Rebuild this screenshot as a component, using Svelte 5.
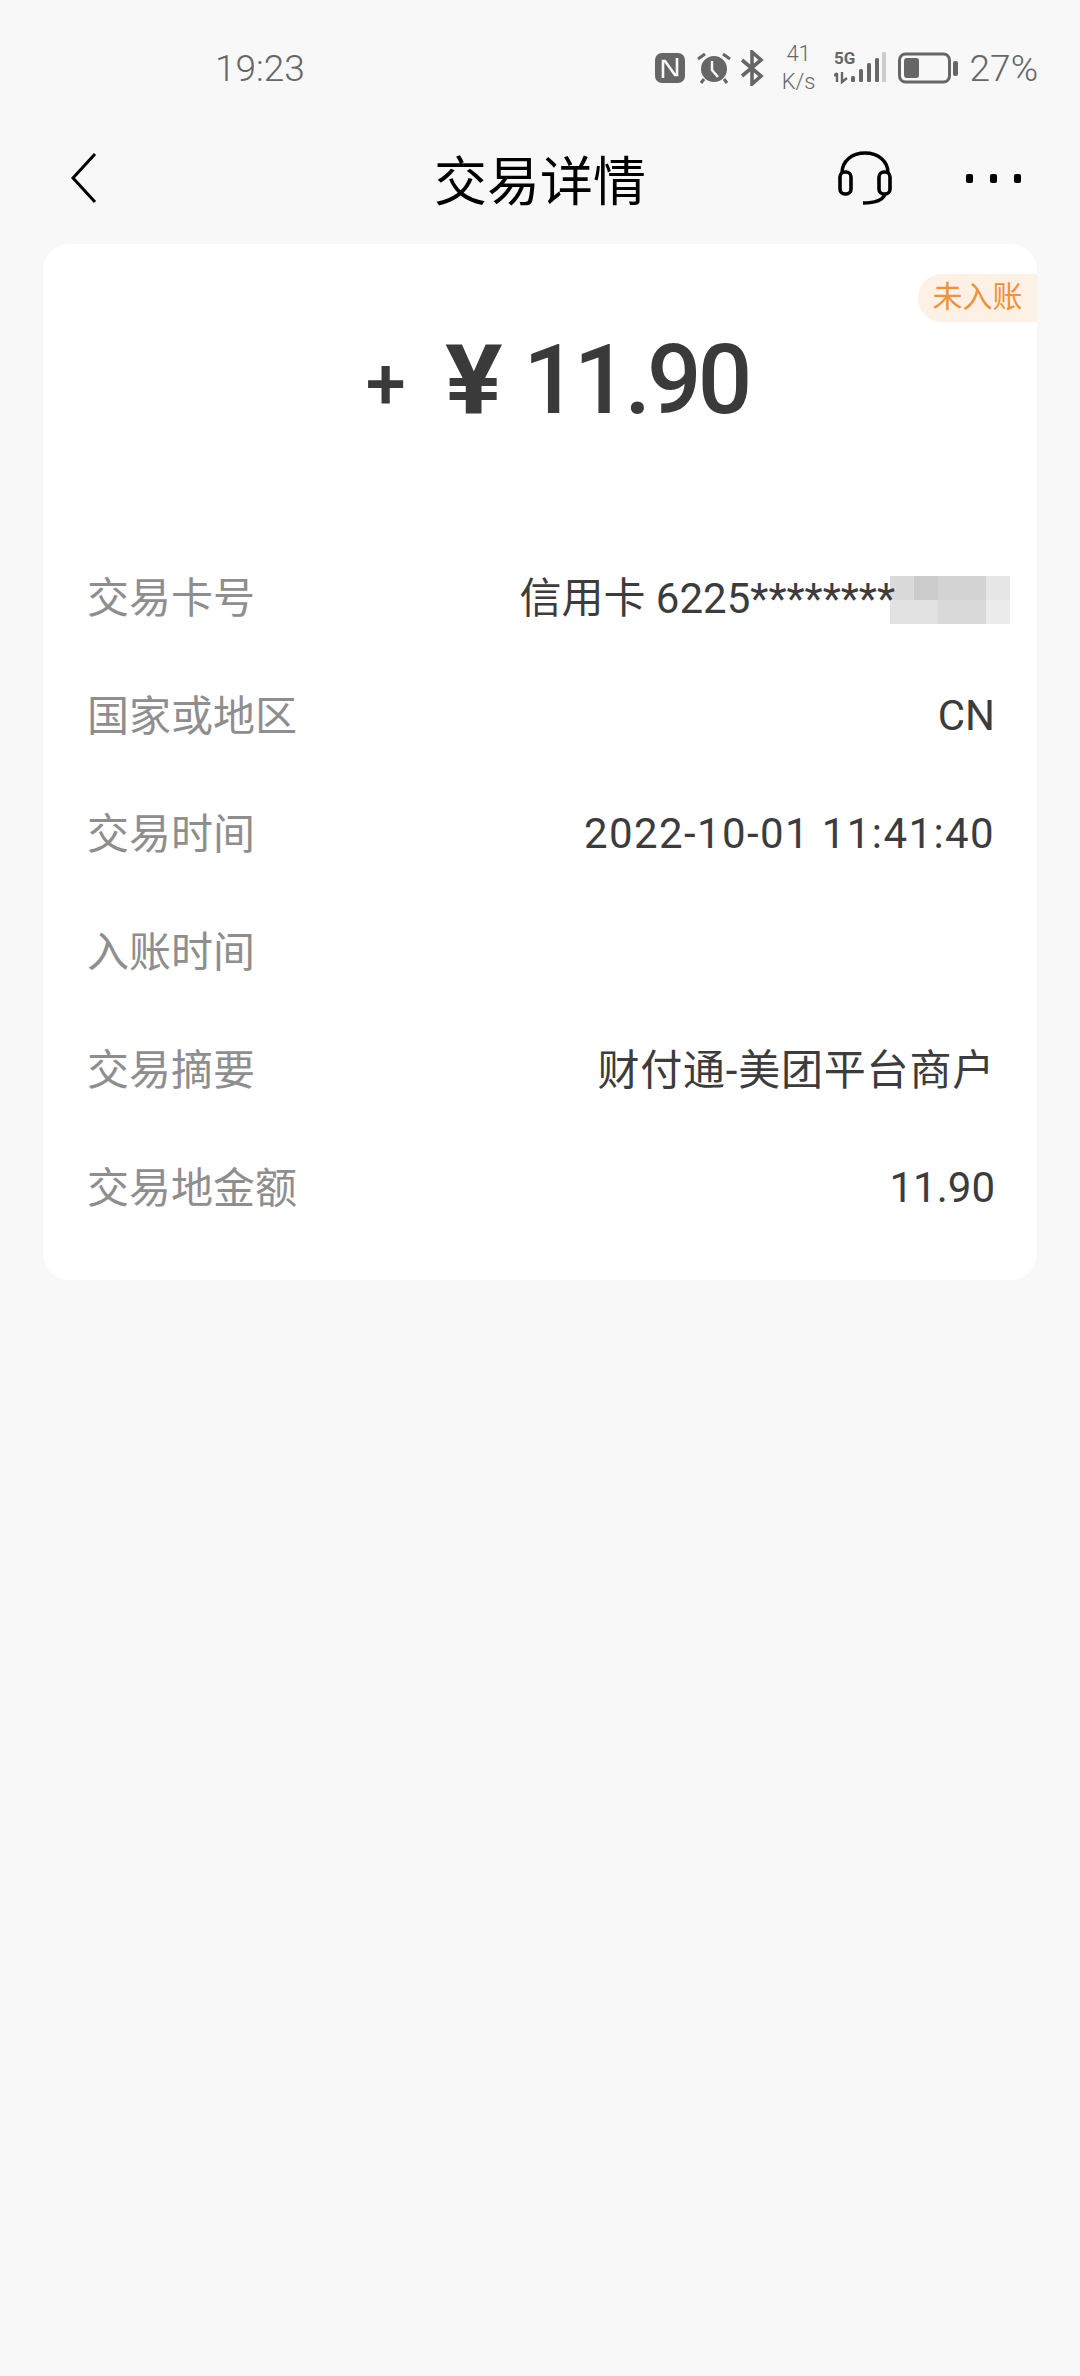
<script>
	const rows = [
		{ label: '交易卡号', value: '信用卡 6225********', kind: 'masked' },
		{ label: '国家或地区', value: 'CN' },
		{ label: '交易时间', value: '2022-10-01 11:41:40', kind: 'wide' },
		{ label: '入账时间', value: '' },
		{ label: '交易摘要', value: '财付通-美团平台商户', kind: 'cjk' },
		{ label: '交易地金额', value: '11.90' }
	];

	// grey levels of the card number mosaic
	const mosaic = ['#dadada', '#cbcbcb', '#d3d3d3', '#d3d3d3', '#e6e6e6', '#e2e2e2', '#e2e2e2', '#d9d9d9', '#d9d9d9', '#ececec'];
</script>

<div class="page">
	<header class="status">
		<span class="time">19:23</span>
		<div class="indicators">
			<!-- nfc -->
			<svg width="30" height="30" viewBox="0 0 30 30">
				<rect width="30" height="30" rx="7" fill="#666" />
				<path d="M8 25V8h2l10 14h2V5" fill="none" stroke="#f8f8f8" stroke-width="2.6" />
			</svg>
			<!-- alarm -->
			<svg width="34" height="32" viewBox="0 0 34 32">
				<circle cx="17" cy="17" r="13" fill="#666" />
				<path d="M15 9v9l6 7" fill="none" stroke="#f8f8f8" stroke-width="2.5" />
				<path d="M1 7l7-5M33 7l-7-5M7 27l-3 4M27 27l3 4" fill="none" stroke="#666" stroke-width="3" />
			</svg>
			<!-- bluetooth -->
			<svg class="bt" width="24" height="36" viewBox="0 0 24 36">
				<path d="M2 10l19 16-9 8V2l9 8L2 26" fill="none" stroke="#666" stroke-width="3.6" />
			</svg>
			<div class="speed"><span>41</span><span>K/s</span></div>
			<!-- 5g signal -->
			<svg class="signal" width="52" height="38" viewBox="0 -6 52 38">
				<text x="0" y="12" class="net">5G</text>
				<path d="M3 21v9M0 24l3-3M8 20v10l5-4" fill="none" stroke="#666" stroke-width="2.4" />
				<rect x="17" y="24" width="4" height="6" rx="1.5" fill="#666" />
				<rect x="25" y="17" width="4" height="13" rx="1.5" fill="#666" />
				<rect x="33" y="11" width="4" height="19" rx="1.5" fill="#666" />
				<rect x="41" y="6" width="4" height="24" rx="1.5" fill="#666" />
				<rect x="48" y="0" width="4" height="30" rx="1" fill="#ccc" />
			</svg>
			<!-- battery -->
			<svg width="60" height="32" viewBox="0 0 60 32">
				<rect x="1.5" y="2" width="50" height="28" rx="6" fill="none" stroke="#666" stroke-width="3" />
				<rect x="6" y="6" width="15" height="20" rx="3" fill="#666" />
				<rect x="55" y="9" width="5" height="15" rx="2" fill="#666" />
			</svg>
			<span class="pct">27%</span>
		</div>
	</header>

	<nav class="bar">
		<svg width="28" height="52" viewBox="0 0 28 52">
			<path d="M25 2L3 26l22 24" fill="none" stroke="#000" stroke-width="3" />
		</svg>
		<h1>交易详情</h1>
		<div class="actions">
			<svg width="54" height="54" viewBox="0 0 54 54">
				<path d="M4 22C4 10 14 2 27 2s23 8 23 20" fill="none" stroke="#000" stroke-width="3.6" />
				<rect x="2" y="21" width="11" height="22" rx="5" fill="none" stroke="#000" stroke-width="3.6" />
				<rect x="41" y="21" width="11" height="22" rx="5" fill="none" stroke="#000" stroke-width="3.6" />
				<path d="M47 43c-2 6-10 9-22 9" fill="none" stroke="#000" stroke-width="3.6" />
			</svg>
			<div class="more"><i></i><i></i><i></i></div>
		</div>
	</nav>

	<main class="card">
		<span class="badge">未入账</span>
		<div class="amount">
			<span class="plus">+</span>
			<span class="yen">¥</span>
			<span class="num">11.90</span>
		</div>
		<ul class="rows">
			{#each rows as row}
				<li>
					<span class="label">{row.label}</span>
					<span class="value {row.kind ?? ''}">{row.value}</span>
					{#if row.kind === 'masked'}
						<div class="mosaic">
							{#each mosaic as grey}
								<b style="background:{grey}"></b>
							{/each}
						</div>
					{/if}
				</li>
			{/each}
		</ul>
	</main>
</div>

<style>
	:global(body) {
		margin: 0;
		background: #f8f8f8;
	}

	.page {
		min-height: 2376px;
		background: #f8f8f8;
		font-family: Roboto, 'Noto Sans CJK SC', sans-serif;
		box-sizing: border-box;
	}

	.status {
		display: flex;
		justify-content: space-between;
		align-items: center;
		height: 136px;
		padding: 0 42px 0 215px;
		box-sizing: border-box;
		color: #666;
	}

	.time {
		font-size: 37px;
		font-weight: 300;
	}

	.indicators {
		display: flex;
		align-items: center;
		gap: 12px;
	}

	.bt {
		margin-left: -3px;
	}

	.signal {
		margin-top: -6px;
	}

	.speed {
		display: flex;
		flex-direction: column;
		align-items: center;
		width: 34px;
		margin: 0 6px;
		font-size: 22px;
		line-height: 28px;
		font-weight: 300;
	}

	.net {
		font-size: 17px;
		font-weight: 700;
		fill: #666;
	}

	.pct {
		font-size: 37px;
		font-weight: 300;
	}

	.bar {
		position: relative;
		display: flex;
		justify-content: space-between;
		align-items: center;
		height: 84px;
		padding: 0 59px 0 70px;
		margin-bottom: 24px;
	}

	h1 {
		position: absolute;
		left: 0;
		right: 0;
		margin: 0;
		text-align: center;
		font-size: 53px;
		font-weight: 400;
		color: #000;
	}

	.actions {
		display: flex;
		align-items: center;
		gap: 74px;
		position: relative;
	}

	.more {
		display: flex;
		gap: 17px;
	}

	.more i {
		width: 7px;
		height: 9px;
		border-radius: 2px;
		background: #000;
	}

	.card {
		position: relative;
		margin: 0 43px;
		height: 1036px;
		background: #fff;
		border-radius: 26px;
	}

	.badge {
		position: absolute;
		top: 30px;
		right: 0;
		width: 119px;
		height: 48px;
		line-height: 46px;
		text-align: center;
		border-radius: 24px 0 0 24px;
		background: #fdf0e4;
		color: #f0923a;
		font-size: 30px;
	}

	.amount {
		display: flex;
		justify-content: center;
		align-items: baseline;
		height: 294px;
		padding: 76px 0 0 34px;
		box-sizing: border-box;
		line-height: 120px;
		color: #3a3a3a;
	}

	.plus {
		font-size: 72px;
		font-weight: 500;
		margin-right: 39px;
		transform: translateY(-4px);
	}

	.yen {
		font-size: 96px;
		font-weight: 700;
		margin-right: 27px;
		transform: scaleX(1.12);
		transform-origin: left;
	}

	.num {
		font-size: 96px;
		font-weight: 500;
		letter-spacing: -4px;
	}

	.rows {
		list-style: none;
		margin: 0;
		padding: 0 42px 0 44px;
	}

	li {
		position: relative;
		display: flex;
		justify-content: space-between;
		align-items: center;
		height: 118px;
		font-size: 42px;
	}

	.label {
		padding-bottom: 5px;
		color: #8e8e8e;
	}

	.value {
		color: #3c3c3c;
	}

	.wide {
		letter-spacing: 1.4px;
	}

	.cjk {
		padding-bottom: 5px;
		letter-spacing: 0.8px;
	}

	/* the last star sits on top of the mosaic */
	.masked {
		position: relative;
		z-index: 1;
		padding-bottom: 5px;
		margin-right: 100px;
	}

	.mosaic {
		position: absolute;
		top: 38px;
		right: -15px;
		display: grid;
		grid-template-columns: repeat(5, 24px);
		grid-auto-rows: 24px;
	}
</style>
